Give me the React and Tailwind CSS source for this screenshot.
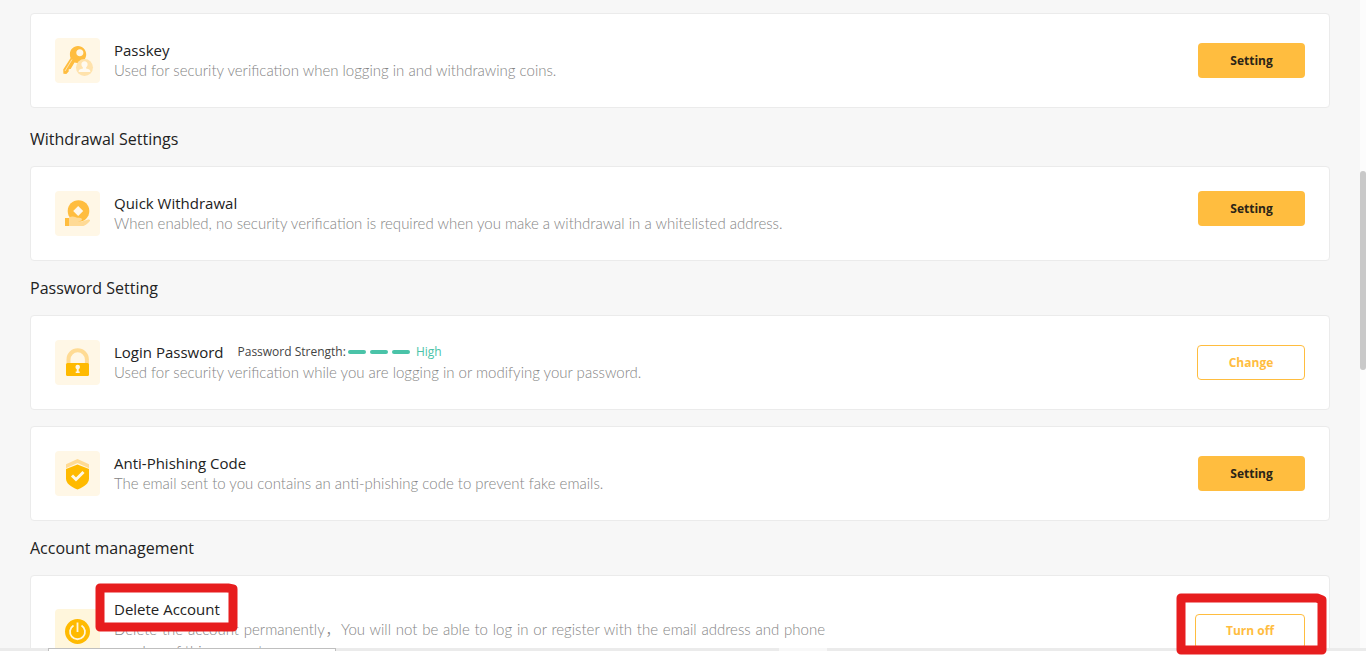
import React from 'react';
import { clsx } from 'clsx';

function PasskeyIcon() {
  return (
    <svg viewBox="0 0 45 45" className="size-full" fill="none">
      <path
        fillRule="evenodd"
        fill="#ffbd3f"
        d="M23 8c-4.700 0-8.100 3.700-8.100 8 0 1.700.2 2.700.7 3.900L8.200 31.600l.2 4.200 2.900.2 2.400-2.500v-2.200l2-.2 3.800-6.500c1.200.3 2.400.5 3.800.3 4.700-.5 7.900-4 7.900-8.400C31.200 11.700 27.600 8 23 8Zm1.800 3.200c2 0 3.600 1.500 3.600 3.500s-1.600 3.500-3.600 3.500-3.500-1.500-3.500-3.500 1.500-3.500 3.500-3.500Z"
      />
      <path d="m10 33 7-11.500" stroke="#ffe3ad" strokeWidth="1" />
      <circle cx="29.500" cy="29.500" r="8.500" fill="#ffe2ab" />
      <path
        fill="#fffaf0"
        d="M29.500 23.200c-1.900 0-3.100 1.300-3.100 3.100 0 1.400.6 2.500 1.500 3.200v1c-2.900.5-4.300 1.400-4.300 2.900 0 .4.300.7.700.7h10.400c.4 0 .7-.3.7-.7 0-1.500-1.400-2.400-4.300-2.900v-1c.9-.7 1.500-1.800 1.500-3.200 0-1.800-1.200-3.100-3.100-3.100Z"
      />
    </svg>
  );
}

function WithdrawalIcon() {
  return (
    <svg viewBox="0 0 45 45" className="size-full" fill="none">
      <circle cx="23.500" cy="20" r="10.800" fill="#ffbd3f" />
      <path d="m23.200 15 5 5-5 5-5-5Z" fill="#fff8eb" />
      <path
        fill="#ffda95"
        d="M14 26.500c2.200-1.300 4.400-1.500 6.200-.4 1.300.8 3.200.8 5.400.8 1.600 0 1.900 2.400.4 2.800l-3.600.7h4.400l6.400-1.900c1.500-.4 2.500.6 1.500 1.800-1 1.500-4.300 4.500-6.500 4.700H14Z"
      />
      <path d="M10 27h4v8h-4Z" fill="#ffbd3f" />
    </svg>
  );
}

function LockIcon() {
  return (
    <svg viewBox="0 0 45 45" className="size-full" fill="none">
      <path d="M13.500 24v-4.500a9.200 9.200 0 0 1 18.400 0V24" stroke="#ffdb94" strokeWidth="4" />
      <rect x="11" y="23" width="23" height="13" rx="1.500" fill="#ffba00" />
      <circle cx="22.700" cy="27" r="2.300" fill="#fff8e5" />
      <path d="M21.700 28h2v3.500h1v1.500h-4v-1.500h1Z" fill="#fff8e5" />
    </svg>
  );
}

function ShieldIcon() {
  return (
    <svg viewBox="0 0 45 45" className="size-full" fill="none">
      <path d="M11 13.200 22.500 8 34 13.200v4L22.500 12 11 17.200Z" fill="#ffdb94" />
      <path d="M22.500 13.500 34 18v9.500c0 4.800-4.600 8.300-11.500 11-6.900-2.700-11.500-6.200-11.500-11V18Z" fill="#ffba00" />
      <path d="m17 24.500 4 4 7.500-7.500" stroke="#fff8e5" strokeWidth="3" />
    </svg>
  );
}

function PowerIcon() {
  return (
    <svg viewBox="0 0 45 45" className="size-full" fill="none">
      <circle cx="22.500" cy="22.500" r="12.500" fill="#ffba00" />
      <path d="M18.500 16.400a7.500 7.500 0 1 0 8 0M22.500 13.500v9.500" stroke="#fff6dc" strokeWidth="1.800" />
    </svg>
  );
}

function ActionButton({ outline, className, children }) {
  return (
    <button
      type="button"
      className={clsx(
        'h-[35px] shrink-0 rounded text-[12px] font-bold',
        outline ? 'border border-[#ffbd3f] bg-white text-[#ffbd3f]' : 'bg-[#ffbd3f] text-[#2b2417]',
        className
      )}
    >
      {children}
    </button>
  );
}

function SettingCard({ icon, iconBg = 'bg-[#fff7e6]', title, extra, text, textClass, action }) {
  return (
    <div className="flex items-center rounded border border-[#ebebeb] bg-white p-6">
      <div className={clsx('size-[45px] shrink-0 overflow-hidden rounded-sm', iconBg)}>{icon}</div>
      <div className="ml-[14px] min-w-0 flex-1">
        <div className="flex items-center text-[15px] leading-[18px] text-[#222]">
          <h3>{title}</h3>
          {extra}
        </div>
        <p
          className={clsx(
            "font-['Lato','Noto_Sans_CJK_SC',sans-serif] text-[15px] leading-[22px] font-light text-[#858585]",
            textClass
          )}
        >
          {text}
        </p>
      </div>
      {action}
    </div>
  );
}

function PasswordStrength() {
  return (
    <div className="ml-[14px] flex items-center text-[12px] text-[#444]">
      <span>Password Strength:</span>
      <span className="mx-0.5 flex gap-1">
        <span className="h-1 w-[18px] rounded-full bg-[#4ac3a8]" />
        <span className="h-1 w-[18px] rounded-full bg-[#4ac3a8]" />
        <span className="h-1 w-[18px] rounded-full bg-[#4ac3a8]" />
      </span>
      <span className="ml-1 text-[#4ac3a8]">High</span>
    </div>
  );
}

function SectionTitle({ children }) {
  return <h2 className="flex h-[54px] items-center text-[16px] text-[#222]">{children}</h2>;
}

export default function App() {
  return (
    <div className="relative flex h-screen flex-col overflow-hidden bg-white font-['Open_Sans','Noto_Sans_CJK_SC',sans-serif]">
      <div className="flex min-h-0 flex-1">
        <main className="flex-1 overflow-hidden bg-[#f7f7f7] px-[30px] pt-[13px]">
          <SettingCard
            icon={<PasskeyIcon />}
            title="Passkey"
            text="Used for security verification when logging in and withdrawing coins."
            action={<ActionButton className="w-[107px]">Setting</ActionButton>}
          />

          <div className="mt-1">
            <SectionTitle>Withdrawal Settings</SectionTitle>
            <SettingCard
              icon={<WithdrawalIcon />}
              title="Quick Withdrawal"
              text="When enabled, no security verification is required when you make a withdrawal in a whitelisted address."
              action={<ActionButton className="w-[107px] self-start">Setting</ActionButton>}
            />
          </div>

          <SectionTitle>Password Setting</SectionTitle>
          <div className="flex flex-col gap-4">
            <SettingCard
              icon={<LockIcon />}
              title="Login Password"
              extra={<PasswordStrength />}
              text="Used for security verification while you are logging in or modifying your password."
              action={<ActionButton outline className="w-[108px]">Change</ActionButton>}
            />
            <SettingCard
              icon={<ShieldIcon />}
              title="Anti-Phishing Code"
              text="The email sent to you contains an anti-phishing code to prevent fake emails."
              action={<ActionButton className="w-[107px]">Setting</ActionButton>}
            />
          </div>

          <SectionTitle>Account management</SectionTitle>
          <SettingCard
            icon={<PowerIcon />}
            iconBg="bg-[#fff6dc]"
            title="Delete Account"
            text="Delete the account permanently，You will not be able to log in or register with the email address and phone number of this account."
            textClass="max-w-[711px] text-justify"
            action={<ActionButton outline className="w-[110px]">Turn off</ActionButton>}
          />
        </main>
        <div className="w-1.5 shrink-0 bg-[#fcfcfc] pt-[171px]">
          <div className="h-[199px] rounded-full bg-[#c9c9c9]" />
        </div>
      </div>

      <footer className="h-[7px] shrink-0 bg-white">
        <div className="flex h-[3px] bg-[#ebebeb]">
          <div className="ml-12 w-72 border border-b-0 border-[#bfbfbf] bg-white" />
          <div className="ml-[443px] w-12 bg-[#f8f8f8]" />
        </div>
      </footer>

      {/* hand-drawn marker frames */}
      <svg className="absolute bottom-[23px] left-[95px] h-[49px] w-[143px]" viewBox="0 0 143 49" fill="none">
        <path d="M5 5h128l5 1v38H5Z" stroke="#e71d1e" strokeWidth="9" strokeLinejoin="round" />
      </svg>
      <svg className="absolute right-[39px] bottom-0 h-[62px] w-[151px]" viewBox="0 0 151 62" fill="none">
        <path d="M5 5h136l5 2v50H5Z" stroke="#e71d1e" strokeWidth="9" strokeLinejoin="round" />
      </svg>
    </div>
  );
}
